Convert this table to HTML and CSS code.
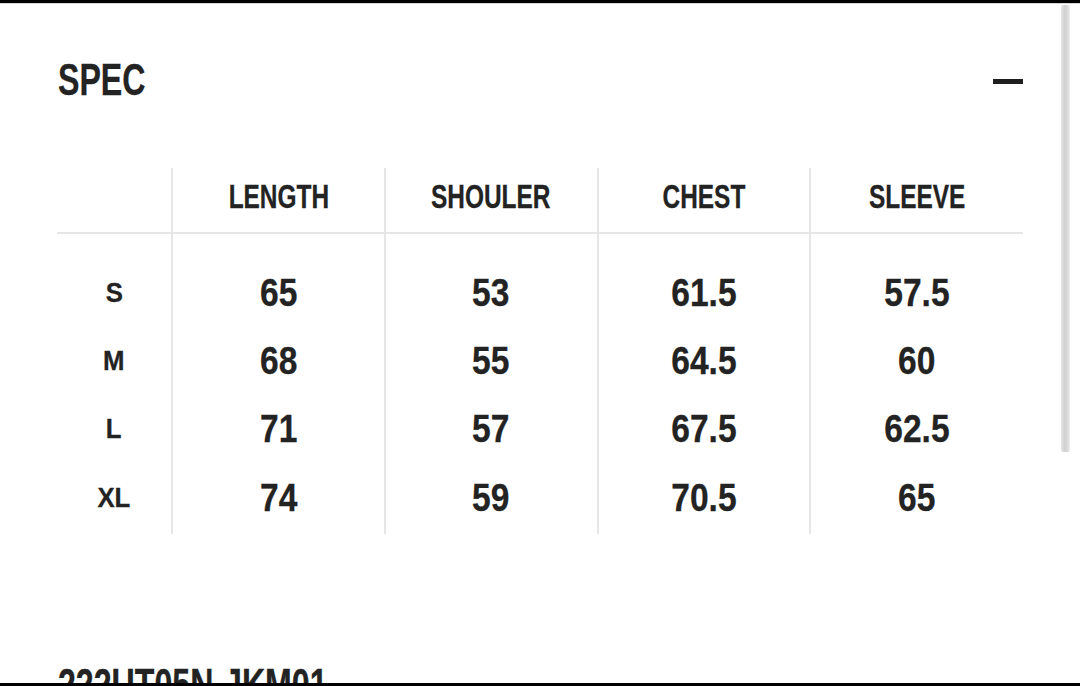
FILE: index.html
```html
<!DOCTYPE html>
<html>
<head>
<meta charset="utf-8">
<link rel="stylesheet" href="styles.css">
</head>
<body>
<div class="topbar"></div>
<div class="page">
  <div class="head">
    <h1 class="title"><span class="cond">SPEC</span></h1>
    <span class="minus"></span>
  </div>
  <table class="spec">
    <thead>
      <tr>
        <th class="size"></th>
        <th><span class="hd">LENGTH</span></th>
        <th><span class="hd">SHOULER</span></th>
        <th><span class="hd">CHEST</span></th>
        <th><span class="hd">SLEEVE</span></th>
      </tr>
    </thead>
    <tbody>
      <tr class="first"><td class="size"><span class="sz">S</span></td><td><span class="num">65</span></td><td><span class="num">53</span></td><td><span class="num">61.5</span></td><td><span class="num">57.5</span></td></tr>
      <tr><td class="size"><span class="sz">M</span></td><td><span class="num">68</span></td><td><span class="num">55</span></td><td><span class="num">64.5</span></td><td><span class="num">60</span></td></tr>
      <tr><td class="size"><span class="sz">L</span></td><td><span class="num">71</span></td><td><span class="num">57</span></td><td><span class="num">67.5</span></td><td><span class="num">62.5</span></td></tr>
      <tr class="last"><td class="size"><span class="sz">XL</span></td><td><span class="num">74</span></td><td><span class="num">59</span></td><td><span class="num">70.5</span></td><td><span class="num">65</span></td></tr>
    </tbody>
  </table>
  <div class="code"><span class="cond">222UT05N-JKM01</span></div>
</div>
<div class="scrollbar"></div>
<div class="bottombar"></div>
</body>
</html>
```
FILE: styles.css
```css
html, body {
  margin: 0;
  padding: 0;
  background: #fff;
}
body {
  width: 1080px;
  height: 686px;
  overflow: hidden;
  position: relative;
  font-family: "Liberation Sans", Arial, sans-serif;
  font-weight: bold;
  color: #232323;
  -webkit-text-stroke: 0.3px #232323;
}
.topbar {
  height: 3px;
  background: #000;
  border-bottom: 1px solid #d6d6d6;
}
.page {
  width: 966px;
  padding-left: 57px;
}
.head {
  display: flex;
  justify-content: space-between;
  align-items: center;
  height: 152px;
}
.title {
  margin: 0 0 0 1px;
  font-size: 44px;
  line-height: 44px;
  font-weight: bold;
}
.cond {
  display: inline-block;
  transform: scaleX(0.73);
  transform-origin: left center;
  white-space: nowrap;
}
.minus {
  width: 30px;
  height: 5px;
  background: #1e1e1e;
  margin-top: 2px;
}
.spec {
  margin-top: 12px;
  border-collapse: collapse;
  table-layout: fixed;
  width: 966px;
}
.spec th, .spec td {
  text-align: center;
  padding: 0;
  border-left: 2px solid #e6e6e6;
  white-space: nowrap;
}
.spec th.size, .spec td.size {
  border-left: none;
  width: 115px;
}
.spec th {
  height: 65px;
  font-size: 33px;
  vertical-align: middle;
  padding-bottom: 6px;
  border-bottom: 2px solid #e6e6e6;
  box-sizing: border-box;
}
.hd {
  display: inline-block;
  transform: scaleX(0.74);
}
.spec td {
  height: 68.5px;
  font-size: 39px;
  line-height: 40px;
  vertical-align: middle;
}
.num {
  display: inline-block;
  transform: scaleX(0.86);
}
.spec td.size {
  font-size: 28px;
}
.sz {
  display: inline-block;
  transform: scaleX(0.92);
}
.spec tr.first td {
  height: 93.5px;
  padding-top: 26px;
  box-sizing: border-box;
}
.spec tr.last td {
  height: 70.5px;
  padding-bottom: 2px;
  box-sizing: border-box;
}
.code {
  margin-top: 129px;
  margin-left: 1px;
  font-size: 44px;
  line-height: 44px;
}
.scrollbar {
  position: absolute;
  top: 5px;
  left: 1061px;
  width: 9px;
  height: 447px;
  background: linear-gradient(to right, #e6e6e6, #d2d2d2 40%, #d8d8d8 70%, #eeeeee);
  border-radius: 2px;
}
.bottombar {
  position: absolute;
  left: 0;
  bottom: 0;
  width: 1080px;
  height: 3px;
  background: #000;
}
```
